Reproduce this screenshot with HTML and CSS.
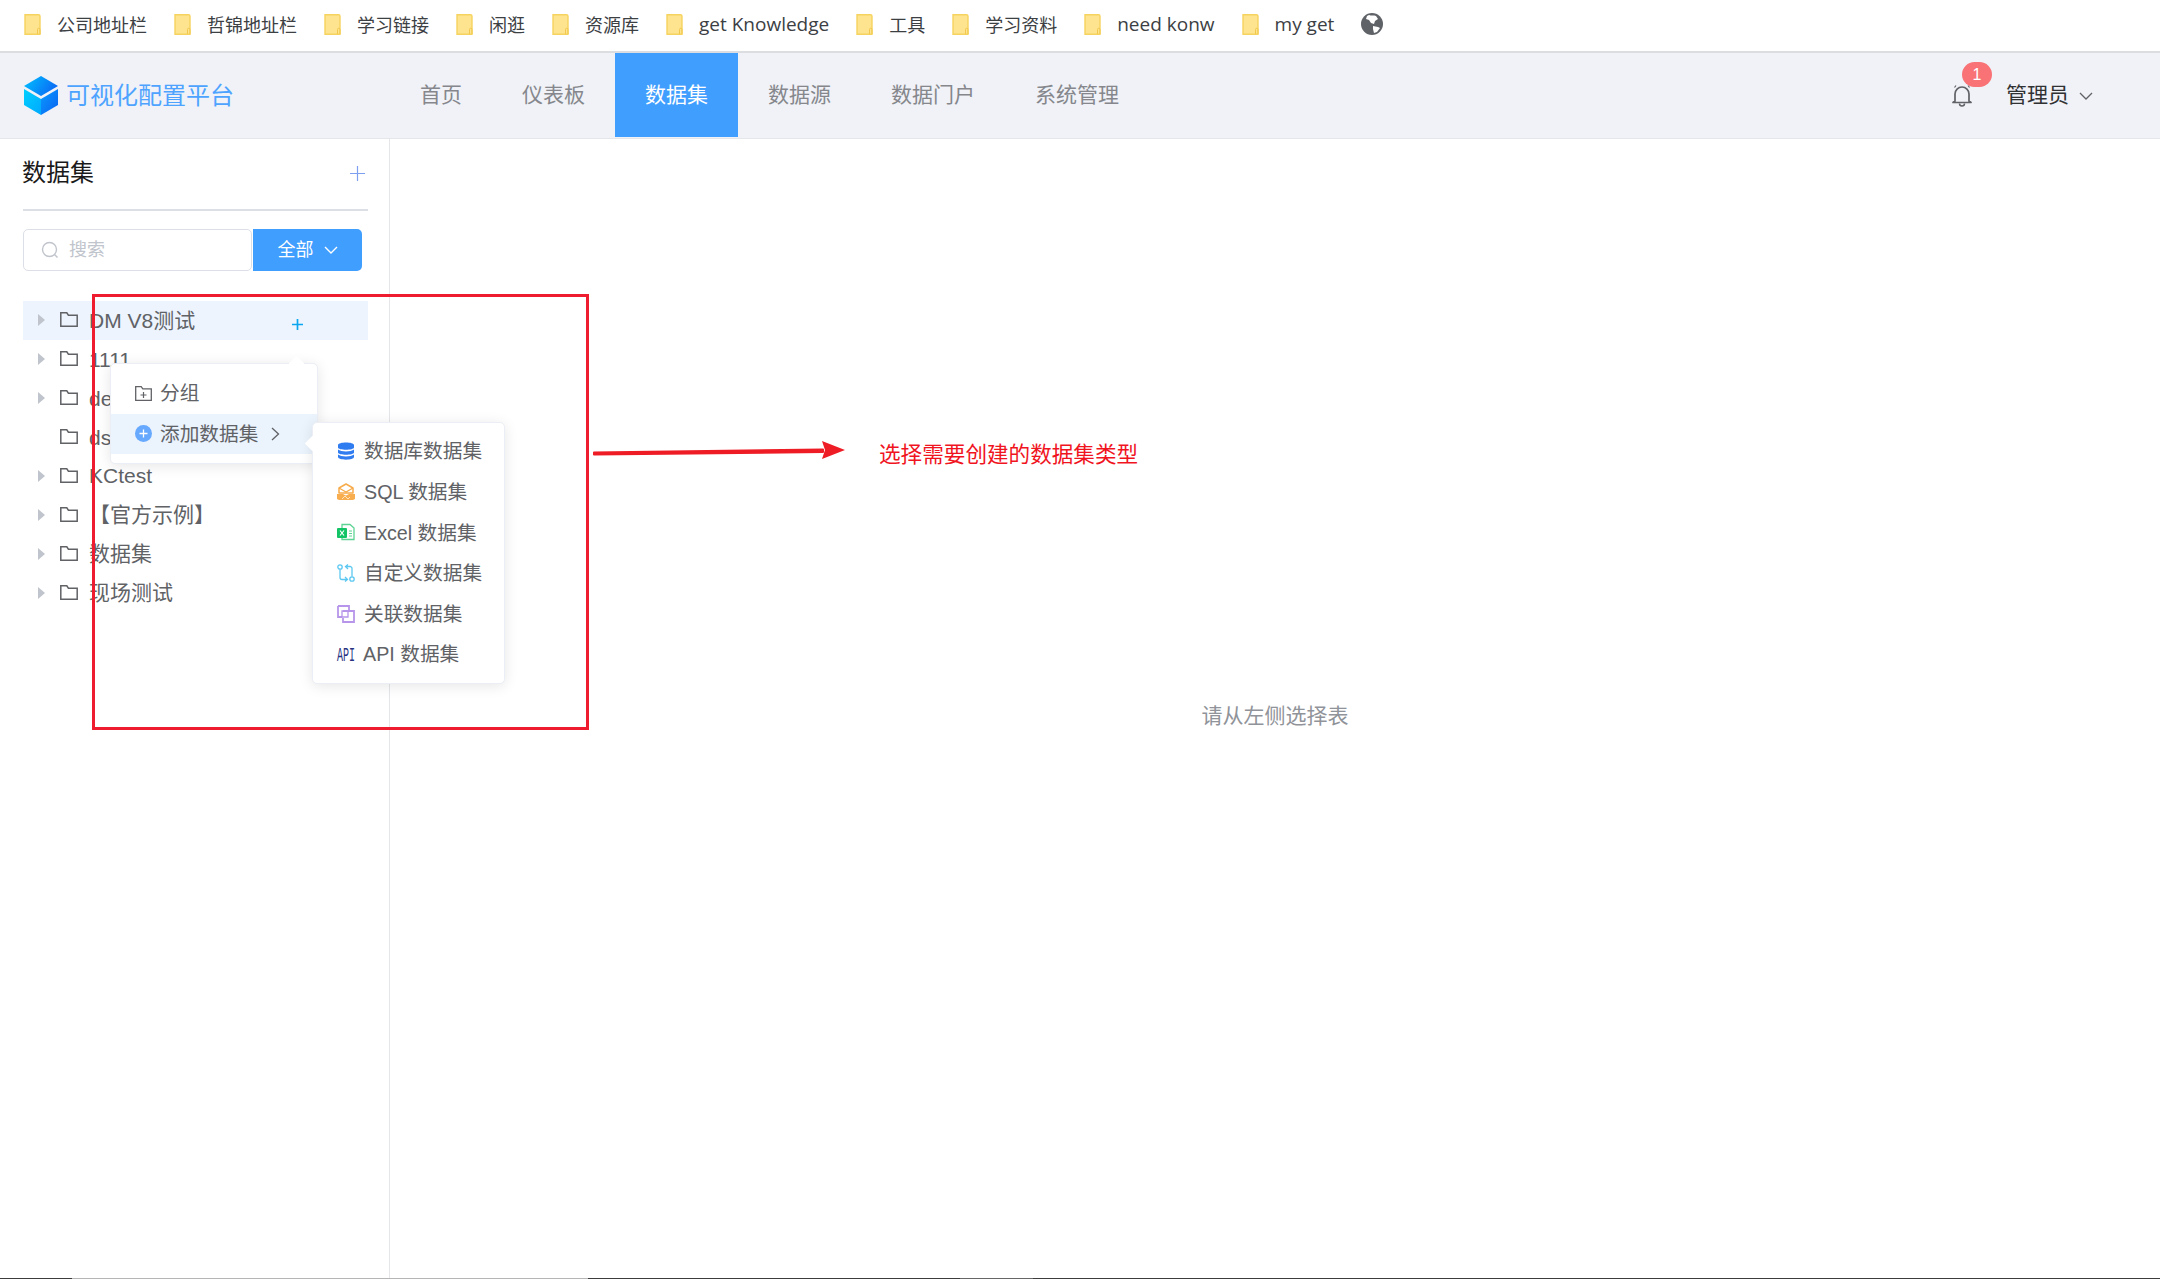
FILE: index.html
```html
<!DOCTYPE html>
<html lang="zh">
<head>
    <meta charset="utf-8">
    <title>可视化配置平台</title>
    <link rel="stylesheet" href="styles.css">
</head>
<body>
    <svg class="defs" width="0" height="0">
        <defs>
            <symbol id="bm" viewBox="0 0 17 21">
                <path d="M1 .7h13.5a1.5 1.5 0 0 1 1.5 1.5v18.1H1z" fill="#ffe48f" stroke="#f6d35f" stroke-width="1.4"/>
                <path d="M13.5 20v-4.5a1 1 0 0 1 2.5 0V20" fill="none" stroke="#f1c84d" stroke-width="1"/>
            </symbol>
            <symbol id="folder" viewBox="0 0 18 15">
                <path d="M.8.8h6l1.6 2.4h8.8v11H.8z" fill="none" stroke="#606266" stroke-width="1.5"/>
            </symbol>
        </defs>
    </svg>

    <!-- bookmarks -->
    <div class="bookmarks">
        <span class="bm"><svg class="bm-ico"><use href="#bm"/></svg>公司地址栏</span>
        <span class="bm"><svg class="bm-ico"><use href="#bm"/></svg>哲锦地址栏</span>
        <span class="bm"><svg class="bm-ico"><use href="#bm"/></svg>学习链接</span>
        <span class="bm"><svg class="bm-ico"><use href="#bm"/></svg>闲逛</span>
        <span class="bm"><svg class="bm-ico"><use href="#bm"/></svg>资源库</span>
        <span class="bm bm-en"><svg class="bm-ico"><use href="#bm"/></svg>get Knowledge</span>
        <span class="bm"><svg class="bm-ico"><use href="#bm"/></svg>工具</span>
        <span class="bm"><svg class="bm-ico"><use href="#bm"/></svg>学习资料</span>
        <span class="bm bm-en"><svg class="bm-ico"><use href="#bm"/></svg>need konw</span>
        <span class="bm bm-en"><svg class="bm-ico"><use href="#bm"/></svg>my get</span>
        <svg class="globe" width="22" height="22" viewBox="0 0 22 22">
            <circle cx="11" cy="11" r="11" fill="#5f6368"/>
            <path d="M8 2c2 1 5 0 7 1l2 3-3 2-1 3-3-1-2-3-3-1 1-3zM12 13l5 1 2 1-3 4-3 1-1-4z" fill="#fff"/>
        </svg>
    </div>

    <!-- top nav -->
    <header class="topbar">
        <div class="logo">
            <svg width="34" height="39" viewBox="0 0 34 39">
                <defs>
                    <linearGradient id="lgTop" x1="0" y1="0" x2="1" y2="0.4">
                        <stop offset="0" stop-color="#00c3ff"/>
                        <stop offset="1" stop-color="#0a6cf5"/>
                    </linearGradient>
                    <linearGradient id="lgLeft" x1="0" y1="0" x2="1" y2="1">
                        <stop offset="0" stop-color="#00d0ff"/>
                        <stop offset="1" stop-color="#00a8ff"/>
                    </linearGradient>
                    <linearGradient id="lgRight" x1="0" y1="0" x2="1" y2="1">
                        <stop offset="0" stop-color="#0a9bff"/>
                        <stop offset="1" stop-color="#0a62f0"/>
                    </linearGradient>
                </defs>
                <path d="M17 0l17 10-17 10L0 10z" fill="url(#lgTop)"/>
                <path d="M0 13l17 10v16L0 29z" fill="url(#lgLeft)"/>
                <path d="M34 13L17 23v16l17-10z" fill="url(#lgRight)"/>
            </svg>
            <span class="logo-text">可视化配置平台</span>
        </div>
        <nav class="nav">
            <span class="nav-item">首页</span>
            <span class="nav-item">仪表板</span>
            <span class="nav-item active">数据集</span>
            <span class="nav-item">数据源</span>
            <span class="nav-item">数据门户</span>
            <span class="nav-item">系统管理</span>
        </nav>
        <div class="user">
            <div class="bell">
                <svg width="20" height="23" viewBox="0 0 20 23">
                    <path d="M3 17V10a7 7 0 0 1 14 0v7l2 1.5H1z" fill="none" stroke="#606266" stroke-width="1.7" stroke-linejoin="round"/>
                    <path d="M7.5 19.5a2.5 2.5 0 0 0 5 0" fill="none" stroke="#606266" stroke-width="1.5"/>
                    <path d="M4 1.5L2.5 3.5M16 1.5l1.5 2" stroke="#606266" stroke-width="1.2"/>
                </svg>
                <span class="badge">1</span>
            </div>
            <span class="user-name">管理员</span>
            <svg class="chev" width="14" height="8" viewBox="0 0 14 8">
                <path d="M1 1l6 6 6-6" fill="none" stroke="#606266" stroke-width="1.3"/>
            </svg>
        </div>
    </header>

    <div class="main">
        <aside class="sidebar">
            <div class="side-head">
                <span class="side-title">数据集</span>
                <svg class="side-add" width="15" height="15" viewBox="0 0 15 15">
                    <path d="M7.5 0v15M0 7.5h15" stroke="#7c9ff0" stroke-width="1.2"/>
                </svg>
            </div>
            <div class="search-row">
                <div class="search-box">
                    <svg width="18" height="18" viewBox="0 0 18 18">
                        <circle cx="8.5" cy="8.5" r="7" fill="none" stroke="#c0c4cc" stroke-width="1.4"/>
                        <path d="M13.5 13.5l3 3" stroke="#c0c4cc" stroke-width="1.4"/>
                    </svg>
                    <span class="placeholder">搜索</span>
                </div>
                <div class="search-btn"><span>全部</span>
                    <svg width="14" height="8" viewBox="0 0 14 8">
                        <path d="M1 1l6 6 6-6" fill="none" stroke="#fff" stroke-width="1.4"/>
                    </svg>
                </div>
            </div>
            <ul class="tree">
                <li class="row current"><i class="tri"></i><svg class="fold"><use href="#folder"/></svg><span>DM V8测试</span>
                    <svg class="row-add" width="11" height="11" viewBox="0 0 11 11"><path d="M5.5 0v11M0 5.5h11" stroke="#0aa5ee" stroke-width="1.7"/></svg>
                </li>
                <li class="row"><i class="tri"></i><svg class="fold"><use href="#folder"/></svg><span>1111</span></li>
                <li class="row"><i class="tri"></i><svg class="fold"><use href="#folder"/></svg><span>de</span></li>
                <li class="row"><i class="tri none"></i><svg class="fold"><use href="#folder"/></svg><span>ds</span></li>
                <li class="row"><i class="tri"></i><svg class="fold"><use href="#folder"/></svg><span>KCtest</span></li>
                <li class="row"><i class="tri"></i><svg class="fold"><use href="#folder"/></svg><span>【官方示例】</span></li>
                <li class="row"><i class="tri"></i><svg class="fold"><use href="#folder"/></svg><span>数据集</span></li>
                <li class="row"><i class="tri"></i><svg class="fold"><use href="#folder"/></svg><span>现场测试</span></li>
            </ul>
        </aside>
        <section class="content">请从左侧选择表</section>
    </div>

    <div class="bottom-line">
        <i class="seg-a"></i><i class="seg-b"></i><i class="seg-c"></i><i class="seg-d"></i><i class="seg-e"></i>
    </div>

    <!-- dropdown -->
    <div class="menu menu-add">
        <div class="menu-item">
            <svg width="17" height="15" viewBox="0 0 17 15">
                <path d="M.7.7h5.5l1.6 2.2h8.5v11.4H.7z" fill="none" stroke="#606266" stroke-width="1.3"/>
                <path d="M8.5 6v6M5.5 9h6" stroke="#606266" stroke-width="1.2"/>
            </svg>
            <span>分组</span>
        </div>
        <div class="menu-item hover">
            <svg width="17" height="17" viewBox="0 0 17 17">
                <circle cx="8.5" cy="8.5" r="8.5" fill="#66a9ff"/>
                <path d="M8.5 4.5v8M4.5 8.5h8" stroke="#fff" stroke-width="1.3"/>
            </svg>
            <span>添加数据集</span>
            <svg class="menu-arrow" width="9" height="14" viewBox="0 0 9 14">
                <path d="M1 1l6.5 6L1 13" fill="none" stroke="#606266" stroke-width="1.3"/>
            </svg>
        </div>
    </div>

    <!-- dataset types -->
    <div class="menu menu-types">
        <div class="menu-item">
            <svg width="18" height="18" viewBox="0 0 18 18">
                <path d="M1 3c0-3.500 16-3.500 16 0v2.500c0 3-16 3-16 0zM1 7.500c3 2.500 13 2.500 16 0v3c0 3-16 3-16 0zM1 12.500c3 2.500 13 2.500 16 0V15c0 3.500-16 3.500-16 0z" fill="#2f7bf0"/>
            </svg>
            <span>数据库数据集</span>
        </div>
        <div class="menu-item">
            <svg width="18" height="18" viewBox="0 0 18 18">
                <path d="M9 1l7 4v5H2V5z" fill="#fff" stroke="#f7ab4a" stroke-width="1.5" stroke-linejoin="round"/>
                <path d="M2 5l7 4 7-4" fill="none" stroke="#f7ab4a" stroke-width="1.3"/>
                <path d="M0 11h6l3 1.500 3-1.500h6v5l-2 1H2l-2-1z" fill="#f8ad4f"/>
                <path d="M5 16l3-3 3 3 2-2" fill="none" stroke="#fde3bf" stroke-width="1"/>
            </svg>
            <span>SQL 数据集</span>
        </div>
        <div class="menu-item">
            <svg width="18" height="18" viewBox="0 0 18 18">
                <path d="M5 1.500h8l4 3.500v11.500H5z" fill="#fff" stroke="#5ed494" stroke-width="1.3"/>
                <rect x="0" y="5" width="10" height="10" rx="1" fill="#12c465"/>
                <path d="M3 7.500l4 5M7 7.500l-4 5" stroke="#fff" stroke-width="1.200"/>
                <path d="M12 8h3M12 10.500h3M12 13h3" stroke="#5ed494" stroke-width="1.100"/>
            </svg>
            <span>Excel 数据集</span>
        </div>
        <div class="menu-item">
            <svg width="18" height="18" viewBox="0 0 18 18">
                <circle cx="3" cy="3" r="2.200" fill="none" stroke="#5cc8f2" stroke-width="1.300"/>
                <circle cx="15" cy="15" r="2.200" fill="none" stroke="#5cc8f2" stroke-width="1.300"/>
                <path d="M3 5.500v8a2 2 0 0 0 2 2h5M8 13l2.500 2.500L8 17.500M15 12.500v-8a2 2 0 0 0-2-2H9M11 .5L8.500 2.500 11 5" fill="none" stroke="#5cc8f2" stroke-width="1.300"/>
            </svg>
            <span>自定义数据集</span>
        </div>
        <div class="menu-item">
            <svg width="18" height="18" viewBox="0 0 18 18">
                <path d="M1 1h11v4M5 12H1V1M6 6h11v11H6V13" fill="none" stroke="#b795ea" stroke-width="1.800"/>
                <path d="M5 6h6v6H5z" fill="none" stroke="#b795ea" stroke-width="1.300"/>
            </svg>
            <span>关联数据集</span>
        </div>
        <div class="menu-item">
            <svg class="api-svg" width="18" height="18" viewBox="0 0 18 18">
                <text class="api-ico" transform="translate(0 15.500) scale(.5 1)">API</text>
            </svg>
            <span class="api-label">API 数据集</span>
        </div>
    </div>

    <!-- red notes on top of the screenshot -->
    <div class="note-box"></div>
    <svg class="note-arrow" width="256" height="20" viewBox="0 0 256 20">
        <path d="M3 12.500L232 9.500 232 12 3 14.500z" fill="#ee1c25" stroke="#ee1c25" stroke-width="2" stroke-linejoin="round"/>
        <path d="M231 1l23 9-23 9 3-9z" fill="#ee1c25"/>
    </svg>
    <div class="note-text">选择需要创建的数据集类型</div>
</body>
</html>
```

FILE: styles.css
```css
* {box-sizing: border-box;}

html, body {margin: 0; height: 100%;}

body {
    width: 2160px;
    height: 1279px;
    overflow: hidden;
    display: flex;
    flex-direction: column;
    position: relative;
    background: #fff;
    color: #606266;
    font-family: "Liberation Sans", "Noto Sans CJK SC", sans-serif;
    line-height: 1.2;
}

.defs {position: absolute;}

/* bookmarks */
.bookmarks {
    height: 53px;
    flex: none;
    display: flex;
    align-items: center;
    gap: 27px;
    padding: 0 0 3px 24px;
    background: #fff;
    border-bottom: 2px solid #dcdde0;
    font-family: "Open Sans", "Noto Sans CJK SC", sans-serif;
    font-size: 18px;
    line-height: normal;
    color: #3c4043;
}
.bm {display: flex; align-items: center; gap: 16px; white-space: nowrap;}
.bm-en {font-size: 19px;}
.bm-ico {width: 17px; height: 21px; flex: none;}
.globe {flex: none;}

/* top nav */
.topbar {
    height: 86px;
    flex: none;
    display: flex;
    align-items: stretch;
    padding-left: 24px;
    background: #f0f2f7;
    border-bottom: 1px solid #e4e6ea;
}
.logo {width: 366px; flex: none; display: flex; align-items: center; gap: 8px;}
.logo-text {font-size: 24px; color: #4da3ff; padding-top: 2px;}

.nav {display: flex; flex: 1; margin-bottom: 1px;}
.nav-item {
    display: flex;
    align-items: center;
    padding: 0 30px;
    font-size: 21px;
    color: #85878c;
}
.nav-item.active {background: #409eff; color: #fff;}

.user {display: flex; align-items: center; padding-right: 67px; font-size: 21px; color: #303133;}
.bell {position: relative; width: 20px; height: 23px; margin-right: 34px;}
.bell svg {display: block;}
.badge {
    position: absolute;
    left: 10px;
    top: -22px;
    width: 30px;
    height: 25px;
    border-radius: 13px;
    background: #f87276;
    color: #fff;
    font-size: 16px;
    line-height: 25px;
    text-align: center;
}
.user-name {padding-bottom: 2px;}
.chev {margin-left: 10px;}

/* body */
.main {flex: 1; display: flex; min-height: 0;}

.sidebar {
    width: 390px;
    flex: none;
    padding-left: 23px;
    border-right: 1px solid #e4e6ea;
}
.side-head {
    width: 345px;
    height: 72px;
    display: flex;
    align-items: center;
    justify-content: space-between;
    padding: 0 3px 4px 0;
    border-bottom: 2px solid #dcdfe6;
}
.side-title {font-size: 24px; color: #1a1a1a; margin-left: -1px; padding-top: 2px;}
.side-add {margin-top: 3px;}

.search-row {display: flex; gap: 1px; margin-top: 18px; height: 42px;}
.search-box {
    width: 229px;
    display: flex;
    align-items: center;
    gap: 10px;
    padding-left: 17px;
    border: 1px solid #dcdfe6;
    border-radius: 5px;
    font-size: 18px;
}
.placeholder {color: #c0c4cc; padding-top: 2px;}
.search-btn {
    width: 109px;
    display: flex;
    align-items: center;
    justify-content: center;
    gap: 10px;
    background: #409eff;
    border-radius: 0 5px 5px 0;
    color: #fff;
    font-size: 18px;
}
.search-btn span {padding-top: 2px;}

.tree {list-style: none; margin: 30px 0 0; padding: 0; width: 345px;}
.row {
    height: 38.9px;
    display: flex;
    align-items: center;
    padding-left: 15px;
    font-size: 21px;
    position: relative;
}
.row.current {background: #edf4fe;}
.tri {
    width: 0;
    height: 0;
    flex: none;
    border-left: 7px solid #c0c4cc;
    border-top: 6px solid transparent;
    border-bottom: 6px solid transparent;
}
.tri.none {visibility: hidden;}
.fold {width: 18px; height: 15px; margin: 0 11px 1px 15px; flex: none;}
.row-add {position: absolute; left: 269px; top: 18px;}

.content {
    flex: 1;
    display: flex;
    align-items: center;
    justify-content: center;
    padding-top: 14px;
    font-size: 21px;
    color: #909399;
}

.bottom-line {height: 1px; flex: none; display: flex; background: #3c3c3c;}
.bottom-line i {display: block;}
.seg-a {width: 72px;}
.seg-b {width: 516px; background: #b5b5b5;}
.seg-c {width: 372px;}
.seg-d {width: 73px; background: #666;}

/* popovers */
.menu {
    position: absolute;
    background: #fff;
    border: 1px solid #ebeef5;
    border-radius: 5px;
    box-shadow: 0 2px 14px rgba(0, 0, 0, .1);
    font-size: 19.7px;
}
.menu::before {
    content: "";
    position: absolute;
    width: 11px;
    height: 11px;
    background: #fff;
    transform: rotate(45deg);
}
.menu-item {
    height: 40.6px;
    display: flex;
    align-items: center;
    gap: 9px;
    padding-left: 24px;
    white-space: nowrap;
    position: relative;
}
.menu-item span {padding-top: 2px;}
.menu-item svg {flex: none;}
.menu-item.hover {background: #ebf3fd;}

.menu-add {left: 110px; top: 363px; width: 208px; height: 101px; padding-top: 9px;}
.menu-add::before {left: 180px; top: -6px;}
.menu-add .menu-item {gap: 8px;}
.menu-arrow {margin-left: 5px;}

.menu-types {left: 312px; top: 422px; width: 193px; height: 262px; padding-top: 8px;}
.menu-types::before {left: -6px; top: 15px;}
.api-svg {overflow: visible;}
.api-ico {font-family: "Liberation Mono", monospace; font-size: 20px; fill: #27337f;}
.api-label {margin-left: -1px;}

/* annotations */
.note-box {
    position: absolute;
    left: 92px;
    top: 294px;
    width: 497px;
    height: 436px;
    border: 3px solid #ee1c2e;
}
.note-arrow {position: absolute; left: 591px; top: 440px;}
.note-text {
    position: absolute;
    left: 879px;
    top: 439px;
    font-size: 21.6px;
    line-height: 32px;
    color: #f0141e;
    white-space: nowrap;
}
```
